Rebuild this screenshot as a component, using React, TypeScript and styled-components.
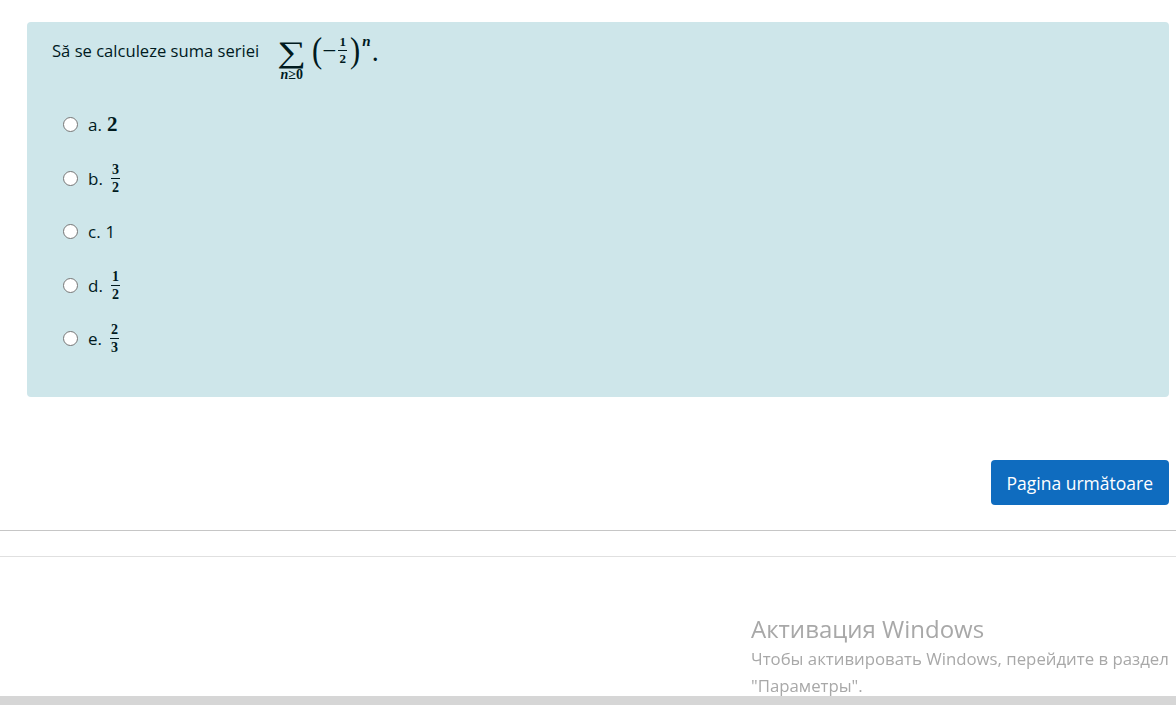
import React from "react";
import styled, { createGlobalStyle } from "styled-components";

const GlobalStyle = createGlobalStyle`
  html, body { margin: 0; padding: 0; background: #ffffff; }
  body {
    font-family: "Open Sans", "Noto Sans", "Liberation Sans", sans-serif;
    color: #001a1e;
    overflow: hidden;
  }
`;

const MATH = `"Liberation Serif", "DejaVu Serif", serif`;

const Page = styled.div`
  padding: 22px 7px 0 27px;
`;

const Formulation = styled.div`
  background: #cee6ea;
  border-radius: 4px;
  height: 375px;
  box-sizing: border-box;
  padding: 17px 25px 0 25px;
`;

const QuestionRow = styled.div`
  display: flex;
  align-items: flex-start;
  font-size: 16.6px;
  line-height: 24px;
`;

const MathWrap = styled.span`
  display: inline-flex;
  align-items: flex-start;
  margin-left: 19px;
  font-family: ${MATH};
  color: #001a1e;
`;

const SumBlock = styled.span`
  display: inline-flex;
  flex-direction: column;
  align-items: center;
  width: 27px;
`;

const SumSign = styled.span`
  display: inline-block;
  font-size: 30px;
  line-height: 26px;
  height: 26px;
  transform: scaleX(1.35);
`;

const SumSub = styled.span`
  font-size: 14px;
  line-height: 14px;
  margin-top: 3px;
  font-weight: bold;
  white-space: nowrap;
`;

const Ital = styled.i`
  font-style: italic;
`;

const Group = styled.span`
  display: inline-flex;
  align-items: center;
  margin-left: 6px;
  margin-top: -7px;
`;

const Paren = styled.span`
  font-size: 36px;
  line-height: 36px;
  font-weight: 300;
  display: inline-block;
  transform: scaleX(0.85);
`;

const Minus = styled.span`
  font-size: 25px;
  line-height: 25px;
  margin: 0 0 0 -1px;
`;

const Frac = styled.span<{ $size?: number }>`
  display: inline-flex;
  flex-direction: column;
  align-items: center;
  font-family: ${MATH};
  font-size: ${(p) => p.$size ?? 13}px;
  line-height: ${(p) => (p.$size ?? 13) - 1}px;
  font-weight: bold;
  margin: 0 2px;
`;

const FracBar = styled.span`
  display: block;
  width: 100%;
  min-width: 9px;
  height: 1px;
  background: #001a1e;
  margin: 2px 0 2px;
`;

const Sup = styled.span`
  font-size: 15px;
  line-height: 15px;
  font-style: italic;
  font-weight: bold;
  align-self: flex-start;
  margin-top: 2px;
  margin-left: 1px;
`;

const Period = styled.span`
  font-size: 20px;
  margin-left: 2px;
  margin-top: 8px;
  font-weight: bold;
`;

const Answers = styled.div`
  margin-top: 16px;
  padding-left: 11px;
`;

const Option = styled.label`
  display: flex;
  align-items: center;
  height: 53.5px;
  font-size: 17px;
`;

const Radio = styled.span`
  width: 13px;
  height: 13px;
  border-radius: 50%;
  border: 1px solid #767676;
  background: #ffffff;
  flex-shrink: 0;
`;

const OptLabel = styled.span`
  margin-left: 10px;
  display: inline-flex;
  align-items: center;
`;

const MathNum = styled.span`
  font-family: ${MATH};
  font-size: 21px;
  font-weight: bold;
  margin-left: 5px;
`;

const PlainNum = styled.span`
  margin-left: 5px;
`;

const OptFrac = styled.span`
  margin-left: 6px;
  display: inline-flex;
`;

const Nav = styled.div`
  display: flex;
  justify-content: flex-end;
  margin-top: 63px;
`;

const NextButton = styled.button`
  background: #0f6cbf;
  color: #ffffff;
  border: none;
  border-radius: 4px;
  height: 45px;
  padding: 0 16px;
  font-family: "Open Sans", "Noto Sans", sans-serif;
  font-size: 17.5px;
  cursor: pointer;
`;

const Rule = styled.hr<{ $color: string; $gap: number }>`
  border: none;
  height: 1px;
  background: ${(p) => p.$color};
  margin: ${(p) => p.$gap}px 0 0 0;
`;

const Watermark = styled.div`
  position: fixed;
  left: 751px;
  top: 613px;
  color: #a8a8a8;
  font-family: "Open Sans", "Noto Sans", sans-serif;
  white-space: nowrap;
`;

const WmTitle = styled.div`
  font-size: 24px;
  line-height: 32px;
`;

const WmText = styled.div`
  font-size: 16.8px;
  line-height: 27px;
`;

const ScrollBar = styled.div`
  position: fixed;
  left: 0;
  right: 0;
  bottom: 0;
  height: 9px;
  background: #d6d6d6;
`;

type Opt = { letter: string; content: React.ReactNode };

const FracNode = ({ n, d, size }: { n: string; d: string; size?: number }) => (
  <Frac $size={size}>
    <span>{n}</span>
    <FracBar />
    <span>{d}</span>
  </Frac>
);

const options: Opt[] = [
  { letter: "a.", content: <MathNum>2</MathNum> },
  { letter: "b.", content: <OptFrac><FracNode n="3" d="2" size={14} /></OptFrac> },
  { letter: "c.", content: <PlainNum>1</PlainNum> },
  { letter: "d.", content: <OptFrac><FracNode n="1" d="2" size={14} /></OptFrac> },
  { letter: "e.", content: <OptFrac><FracNode n="2" d="3" size={14} /></OptFrac> },
];

export default function App() {
  return (
    <>
      <GlobalStyle />
      <Page>
        <Formulation>
          <QuestionRow>
            <span>Să se calculeze suma seriei</span>
            <MathWrap>
              <SumBlock>
                <SumSign>∑</SumSign>
                <SumSub>
                  <Ital>n</Ital>≥0
                </SumSub>
              </SumBlock>
              <Group>
                <Paren>(</Paren>
                <Minus>−</Minus>
                <FracNode n="1" d="2" />
                <Paren>)</Paren>
                <Sup>n</Sup>
                <Period>.</Period>
              </Group>
            </MathWrap>
          </QuestionRow>
          <Answers>
            {options.map((o) => (
              <Option key={o.letter}>
                <Radio />
                <OptLabel>
                  {o.letter}
                  {o.content}
                </OptLabel>
              </Option>
            ))}
          </Answers>
        </Formulation>
        <Nav>
          <NextButton>Pagina următoare</NextButton>
        </Nav>
      </Page>
      <Rule $color="#c6c6c6" $gap={25} />
      <Rule $color="#e0e0e0" $gap={25} />
      <Watermark>
        <WmTitle>Активация Windows</WmTitle>
        <WmText>Чтобы активировать Windows, перейдите в раздел</WmText>
        <WmText>"Параметры".</WmText>
      </Watermark>
      <ScrollBar />
    </>
  );
}
